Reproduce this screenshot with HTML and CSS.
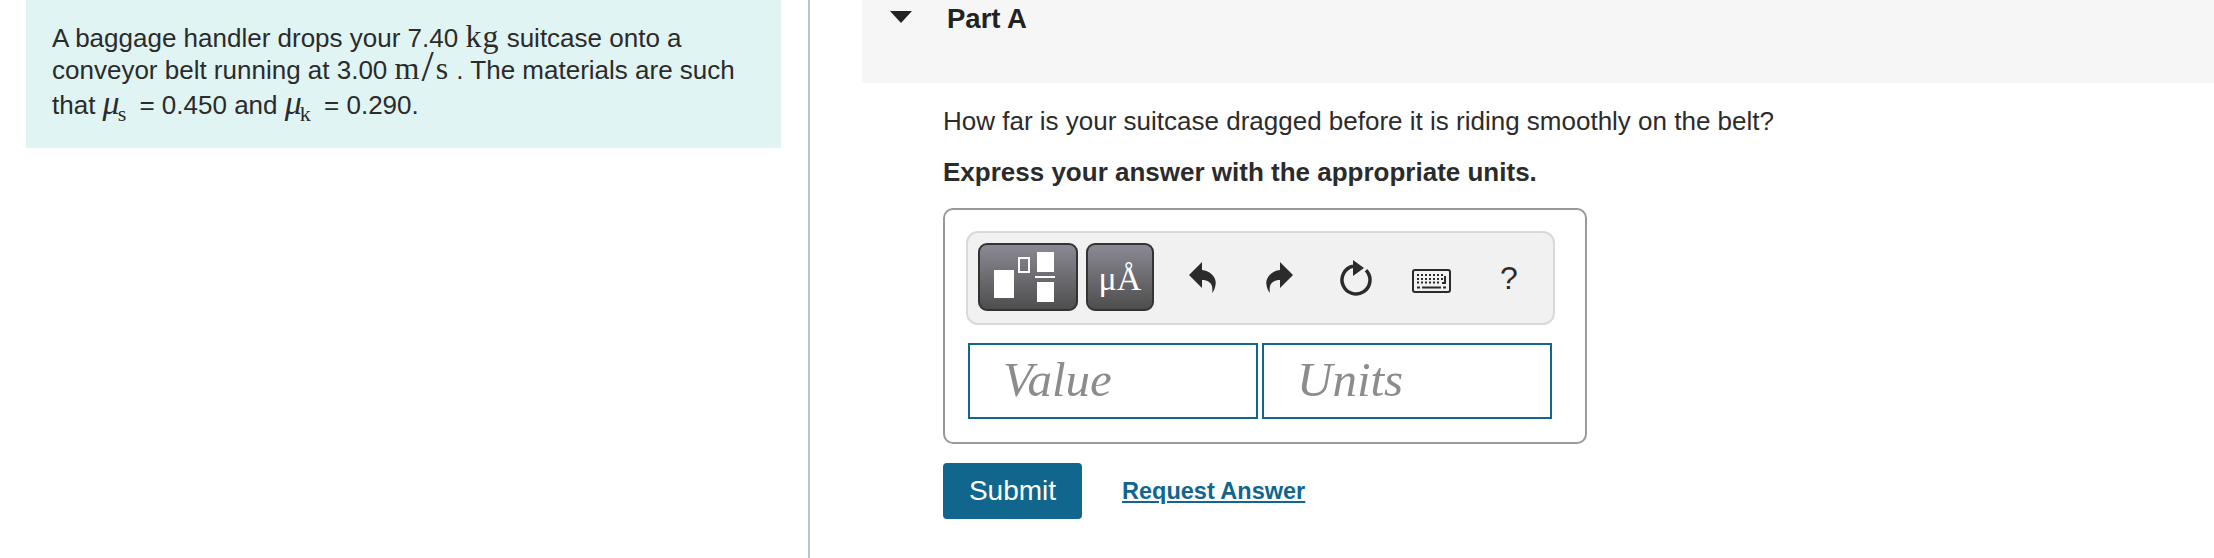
FILE: index.html
```html
<!DOCTYPE html>
<html lang="en">

<head>
    <meta charset="UTF-8" />
    <meta name="viewport" content="width=device-width, initial-scale=1.0" />
    <title>Part A</title>
    <link rel="stylesheet" href="styles.css">
</head>

<body>
    <main class="page">
        <section class="left">
            <div class="intro">
                A baggage handler drops your 7.40 <span class="math">kg</span> suitcase onto a
                conveyor belt running at 3.00 <span class="math">m<span class="slash">/</span>s</span> . The materials are such
                that <span class="math mu"><i>μ</i><sub>s</sub></span> = 0.450 and <span class="math mu"><i>μ</i><sub>k</sub></span> = 0.290.
            </div>
        </section>

        <section class="right">
            <header class="part-head">
                <span class="caret"></span>
                <h2>Part A</h2>
            </header>

            <div class="part-body">
                <p class="question">How far is your suitcase dragged before it is riding smoothly on the belt?</p>
                <p class="hint">Express your answer with the appropriate units.</p>

                <div class="answer">
                    <div class="toolbar">
                        <div class="tool-btn tool-templates">
                            <svg width="61" height="50" viewBox="0 0 61 50">
                                <rect x="0" y="18" width="20" height="28" fill="#fff" />
                                <rect x="25" y="6" width="10" height="14" fill="none" stroke="#fff" stroke-width="2" />
                                <rect x="43" y="0" width="17" height="20" fill="#fff" />
                                <rect x="41" y="24" width="20" height="2" fill="#fff" />
                                <rect x="43" y="30" width="17" height="20" fill="#fff" />
                            </svg>
                        </div>
                        <div class="tool-btn tool-symbols">μÅ</div>

                        <svg class="icon-undo" width="27" height="32" viewBox="0 0 27 32">
                            <path d="M0 14 L13 1 L13 9 C22 10 28 17 26.500 24 C26 27 25 30 23 32 C24 27 23 23 20 21 C18 19.500 16 19 13 19 L13 27 Z" fill="#2b2b2b" />
                        </svg>
                        <svg class="icon-redo" width="27" height="32" viewBox="0 0 27 32">
                            <path d="M27 14 L14 1 L14 9 C5 10 -1 17 .5 24 C1 27 2 30 4 32 C3 27 4 23 7 21 C9 19.500 11 19 14 19 L14 27 Z" fill="#2b2b2b" />
                        </svg>
                        <svg class="icon-reset" width="32" height="36" viewBox="0 0 32 36">
                            <path d="M26 10.200 A14 14 0 1 1 13 6.300" fill="none" stroke="#2b2b2b" stroke-width="3.500" />
                            <path d="M13 0 L24 8 L13 16 Z" fill="#2b2b2b" />
                        </svg>
                        <svg class="icon-keys" width="39" height="24" viewBox="0 0 39 24">
                            <rect x="1" y="1" width="37" height="22" rx="2" fill="#f1f1f1" stroke="#2b2b2b" stroke-width="2" />
                            <path d="M5 6 H33 M5 10 H31 M5 13.500 H28" fill="none" stroke="#2b2b2b" stroke-width="2" stroke-dasharray="2 2" />
                            <path d="M33 7 V14 H30" fill="none" stroke="#2b2b2b" stroke-width="2" />
                            <path d="M10 18.500 H29" fill="none" stroke="#2b2b2b" stroke-width="2" />
                            <path d="M5 18.500 H8 M31 18.500 H34" fill="none" stroke="#2b2b2b" stroke-width="2" />
                        </svg>
                        <span class="tool-help">?</span>
                    </div>

                    <div class="fields">
                        <div class="field">Value</div>
                        <div class="field">Units</div>
                    </div>
                </div>

                <div class="actions">
                    <button class="submit" type="button">Submit</button>
                    <a class="request" href="#">Request Answer</a>
                </div>
            </div>
        </section>
    </main>
</body>

</html>
```

FILE: styles.css
```css
html,
body {
    margin: 0;
    height: 100%;
    overflow: hidden;
}

body {
    background-color: #fff;
    color: #2b2b2b;
    font-family: "Liberation Sans", Arial, sans-serif;
    font-size: 26px;
}

.page {
    display: flex;
    height: 558px;
}

.left {
    width: 810px;
    flex-shrink: 0;
    padding-left: 26px;
    padding-right: 27px;
    box-sizing: border-box;
    border-right: 2px solid #b7c6d6;
}

.intro {
    background-color: #e0f4f3;
    height: 148px;
    padding: 22px 26px 0;
    box-sizing: border-box;
    line-height: 32px;
    font-size: 26px;
}

.math {
    font-family: "Liberation Serif", "Times New Roman", serif;
    font-size: 32px;
    letter-spacing: 1px;
    line-height: 0;
}

.math.mu {
    line-height: 34px;
}

.math i {
    font-size: 34px;
}

.math sub {
    margin-left: -3px;
    margin-right: 5px;
    font-size: 22px;
    line-height: 0;
}

.slash {
    margin: 0 1px;
    font-size: 44px;
    line-height: 0;
    vertical-align: -2px;
}

.right {
    flex: 1;
    margin-left: 52px;
}

.part-head {
    display: flex;
    height: 83px;
    background-color: #f6f6f6;
    padding-left: 28px;
}

.caret {
    width: 0;
    height: 0;
    margin-top: 11px;
    border-left: 11px solid transparent;
    border-right: 11px solid transparent;
    border-top: 12px solid #222;
}

.part-head h2 {
    margin: 1px 0 0 35px;
    font-size: 27.500px;
    line-height: 36px;
    font-weight: bold;
    color: #222;
}

.part-body {
    padding-left: 81px;
}

.question {
    margin: 21px 0 0;
    line-height: 34px;
}

.hint {
    margin: 17px 0 0;
    line-height: 34px;
    font-weight: bold;
}

.answer {
    width: 644px;
    height: 236px;
    margin-top: 19px;
    padding: 21px 0 0 21px;
    box-sizing: border-box;
    border: 2px solid #999;
    border-radius: 10px;
}

.toolbar {
    display: flex;
    align-items: center;
    width: 589px;
    height: 94px;
    padding-left: 10px;
    box-sizing: border-box;
    background-color: #f1f1f1;
    border: 2px solid #d9d9d9;
    border-radius: 12px;
}

.tool-btn {
    display: flex;
    align-items: center;
    justify-content: center;
    height: 68px;
    margin-bottom: 2px;
    box-sizing: border-box;
    border: 2px solid #333;
    border-radius: 9px;
    background: linear-gradient(#8b8994, #4e4e4e);
    color: #fff;
}

.tool-templates {
    width: 100px;
}

.tool-templates svg {
    margin-right: 7px;
}

.tool-symbols {
    width: 68px;
    margin-left: 8px;
    padding-top: 4px;
    font-family: "Liberation Serif", "Times New Roman", serif;
    font-size: 34px;
}

.icon-undo {
    margin-left: 35px;
    margin-bottom: 2px;
}

.icon-redo {
    margin-left: 50px;
    margin-bottom: 2px;
}

.icon-reset {
    margin-left: 47px;
}

.icon-keys {
    margin-left: 40px;
    margin-top: 6px;
}

.tool-help {
    margin-left: 49px;
    font-size: 32px;
}

.fields {
    display: flex;
    gap: 4px;
    margin-top: 18px;
    margin-left: 2px;
}

.field {
    width: 290px;
    height: 76px;
    padding-left: 33px;
    box-sizing: border-box;
    border: 2px solid #10668c;
    font-family: "Liberation Serif", "Times New Roman", serif;
    font-style: italic;
    font-size: 49px;
    line-height: 70px;
    color: #8c8c8c;
}

.actions {
    display: flex;
    align-items: center;
    margin-top: 19px;
}

.submit {
    width: 139px;
    height: 56px;
    padding: 0;
    border: 0;
    border-radius: 4px;
    background-color: #10668c;
    color: #fff;
    font-family: inherit;
    font-size: 28px;
}

.request {
    margin-left: 40px;
    color: #10668c;
    font-size: 23.500px;
    font-weight: bold;
}
```
